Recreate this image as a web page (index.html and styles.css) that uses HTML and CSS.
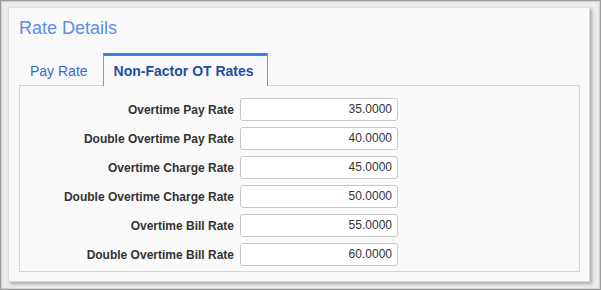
FILE: index.html
```html
<!DOCTYPE html>
<html>
<head>
<meta charset="utf-8">
<link rel="stylesheet" href="styles.css">
</head>
<body>
<div class="window">
  <div class="panel">
    <div class="title">Rate Details</div>
    <div class="tabs">
      <div class="tab">Pay Rate</div>
      <div class="tab active">Non-Factor OT Rates</div>
    </div>
    <div class="box">
      <div class="form">
        <label class="lbl">Overtime Pay Rate</label><div class="inp">35.0000</div>
        <label class="lbl">Double Overtime Pay Rate</label><div class="inp">40.0000</div>
        <label class="lbl">Overtime Charge Rate</label><div class="inp">45.0000</div>
        <label class="lbl">Double Overtime Charge Rate</label><div class="inp">50.0000</div>
        <label class="lbl">Overtime Bill Rate</label><div class="inp">55.0000</div>
        <label class="lbl">Double Overtime Bill Rate</label><div class="inp">60.0000</div>
      </div>
    </div>
  </div>
</div>
</body>
</html>
```
FILE: styles.css
```css
html, body {
  margin: 0;
  padding: 0;
}
body {
  font-family: "Liberation Sans", Arial, sans-serif;
  background: #ececec;
}
.window {
  width: 601px;
  height: 290px;
  box-sizing: border-box;
  border: 1px solid #9b9b9b;
  box-shadow: inset 1px 1px 0 #cfcfcf, inset -1px -1px 0 #cfcfcf;
  background: #ebebeb;
  padding: 6px 10px 7px 7px;
}
.panel {
  background: #f9f9f9;
  border: 1px solid #dedede;
  box-shadow: 2px 2px 3px rgba(0,0,0,0.28);
  padding: 0 9px 9px 10px;
}
.title {
  font-size: 18px;
  line-height: 21px;
  color: #5b8def;
  margin-top: 10px;
  margin-left: 0;
}
.tabs {
  display: flex;
  align-items: flex-end;
  margin-top: 14px;
  margin-bottom: -1px;
  height: 33px;
  position: relative;
}
.tab {
  height: 30px;
  box-sizing: border-box;
  display: flex;
  align-items: center;
  font-size: 14px;
  color: #3a6cc8;
  padding: 0 15px 1px 11px;
}
.tab.active {
  height: 33px;
  border-top: 3px solid #3f80e4;
  border-left: 1px solid #8a9bb3;
  border-right: 1px solid #8a9bb3;
  background: #fafafa;
  font-weight: bold;
  color: #1c4fa0;
  padding: 0 13px 1px 10px;
}
.box {
  border: 1px solid #cbd8e6;
  background: #fafafa;
  padding: 12px 0 5px 0;
}
.form {
  display: grid;
  grid-template-columns: 214px 158px;
  grid-auto-rows: 23px;
  column-gap: 6px;
  row-gap: 6px;
  align-items: center;
}
.lbl {
  text-align: right;
  font-size: 12px;
  font-weight: bold;
  color: #333333;
}
.inp {
  height: 23px;
  box-sizing: border-box;
  border: 1px solid #c8c8c8;
  border-radius: 3px;
  background: #ffffff;
  font-size: 12px;
  color: #333333;
  text-align: right;
  padding-right: 5px;
  line-height: 21px;
}
```
